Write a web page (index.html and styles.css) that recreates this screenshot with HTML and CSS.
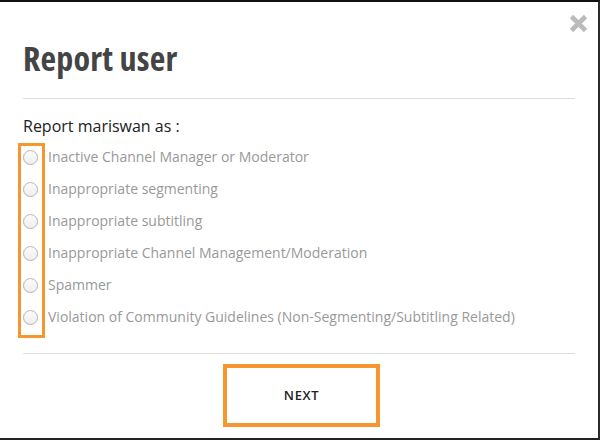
FILE: index.html
```html
<!DOCTYPE html>
<html>
<head>
<meta charset="utf-8">
<link rel="stylesheet" href="styles.css">
</head>
<body>
<div class="frame">
  <div class="dialog">
    <button class="close" aria-label="Close">
      <svg width="19" height="19" viewBox="0 0 19 19"><path d="M2.5 2.5 L16.5 16.5 M16.5 2.5 L2.5 16.5" stroke="#bbbbbb" stroke-width="4.6" stroke-linecap="butt"/></svg>
    </button>
    <h1 class="title">Report user</h1>
    <hr class="sep">
    <div class="prompt">Report mariswan as :</div>
    <div class="options">
      <span class="highlight"></span>
      <label class="opt"><span class="radio"></span><span class="label">Inactive Channel Manager or Moderator</span></label>
      <label class="opt"><span class="radio"></span><span class="label">Inappropriate segmenting</span></label>
      <label class="opt"><span class="radio"></span><span class="label">Inappropriate subtitling</span></label>
      <label class="opt"><span class="radio"></span><span class="label">Inappropriate Channel Management/Moderation</span></label>
      <label class="opt"><span class="radio"></span><span class="label">Spammer</span></label>
      <label class="opt"><span class="radio"></span><span class="label">Violation of Community Guidelines (Non-Segmenting/Subtitling Related)</span></label>
    </div>
    <hr class="sep sep-bottom">
    <div class="actions">
      <button class="next">NEXT</button>
    </div>
  </div>
</div>
</body>
</html>
```

FILE: styles.css
```css
html, body {
  margin: 0;
  padding: 0;
  background: #1c1c1c;
}
.frame {
  width: 600px;
  height: 440px;
  box-sizing: border-box;
  border-top: 2px solid #111;
  border-right: 2px solid #2a2a2a;
  border-bottom: 2px solid #222;
  background: #fff;
  font-family: "Open Sans", "Liberation Sans", sans-serif;
}
.dialog {
  position: relative;
  height: 100%;
  padding: 36px 23px 0 23px;
  box-sizing: border-box;
}
.close {
  position: absolute;
  top: 12px;
  right: 10px;
  width: 19px;
  height: 19px;
  padding: 0;
  border: 0;
  background: none;
  display: block;
}
.close svg { display: block; }
.title {
  margin: 0;
  font-size: 34px;
  line-height: 40px;
  font-weight: 700;
  font-stretch: 82%;
  color: #444;
  letter-spacing: 0.2px;
}
.sep {
  margin: 20px 0 0 0;
  border: 0;
  height: 1px;
  background: #dedede;
}
.prompt {
  margin-top: 16px;
  font-size: 16px;
  line-height: 22px;
  font-weight: 500;
  color: #222;
}
.options {
  position: relative;
  margin-top: 4px;
  margin-left: 1px;
}
.highlight {
  position: absolute;
  left: -6px;
  top: 2px;
  width: 21px;
  height: 189px;
  border: 3px solid #f7962e;
}
.opt {
  display: flex;
  align-items: center;
  height: 32px;
}
.radio {
  width: 15px;
  height: 15px;
  box-sizing: border-box;
  border: 1px solid #b4b4b4;
  border-radius: 50%;
  background: linear-gradient(#fcfcfc, #eeeeee);
  margin-left: -1px;
  margin-right: 10px;
  flex: none;
}
.label {
  font-size: 14px;
  color: #999;
  line-height: 20px;
  margin-top: 0;
}
.sep-bottom {
  margin-top: 20px;
}
.actions {
  display: flex;
  justify-content: center;
  margin-top: 10px;
  padding-left: 5px;
}
.next {
  width: 157px;
  height: 63px;
  box-sizing: border-box;
  border: 4px solid #f7962e;
  background: #fff;
  font-family: "Open Sans", "Liberation Sans", sans-serif;
  font-size: 13px;
  font-weight: 600;
  letter-spacing: 0.6px;
  color: #222;
  padding: 0 0 2px 0;
}
```
